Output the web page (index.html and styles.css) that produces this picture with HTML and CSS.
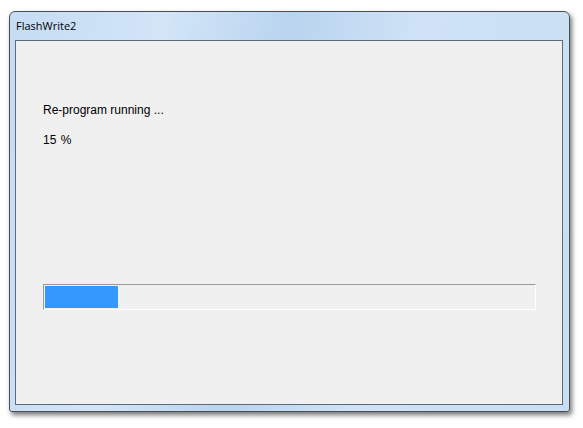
FILE: index.html
```html
<!DOCTYPE html>
<html>
<head>
<meta charset="utf-8">
<link rel="stylesheet" href="styles.css">
</head>
<body>
<div class="window">
  <div class="titlebar">FlashWrite2</div>
  <div class="client">
    <div class="status">Re-program running ...</div>
    <div class="percent">15 %</div>
    <div class="progress"><div class="fill" style="width:15%"></div></div>
  </div>
</div>
</body>
</html>
```
FILE: styles.css
```css
html, body {
  margin: 0;
  padding: 0;
  background: #ffffff;
}
body {
  width: 583px;
  height: 428px;
  overflow: hidden;
}
.window {
  margin: 11px 0 0 9px;
  width: 561px;
  height: 401px;
  box-sizing: border-box;
  border: 1px solid #4a4f55;
  border-radius: 6px 6px 3px 3px;
  background: linear-gradient(100deg, #c5dcf3 0%, #d3e5f7 25%, #b9d4ef 45%, #cfe2f6 65%, #c9def4 100%);
  box-shadow: 2px 3px 5px rgba(0,0,0,0.55);
  display: flex;
  flex-direction: column;
  padding: 0 6px 6px 5px;
}
.titlebar {
  height: 28px;
  box-sizing: border-box;
  padding: 6px 0 0 1px;
  font-family: "Open Sans", "Noto Sans", sans-serif;
  font-size: 11px;
  color: #000;
}
.client {
  flex: 1;
  border: 1px solid #5d6b79;
  background: #f0f0f0;
  padding: 61px 26px 0 27px;
  font-family: "Liberation Sans", Arial, sans-serif;
  font-size: 12px;
  color: #000;
}
.status {
  line-height: 16px;
}
.percent {
  margin-top: 14px;
  line-height: 16px;
  word-spacing: 1px;
}
.progress {
  margin-top: 136px;
  height: 26px;
  box-sizing: border-box;
  border: 1px solid #ffffff;
  border-top: 1px solid #9a9a9a;
  border-left: 1px solid #9a9a9a;
  padding: 1px;
  background: #f0f0f0;
}
.fill {
  height: 100%;
  background: #3399ff;
}
```
